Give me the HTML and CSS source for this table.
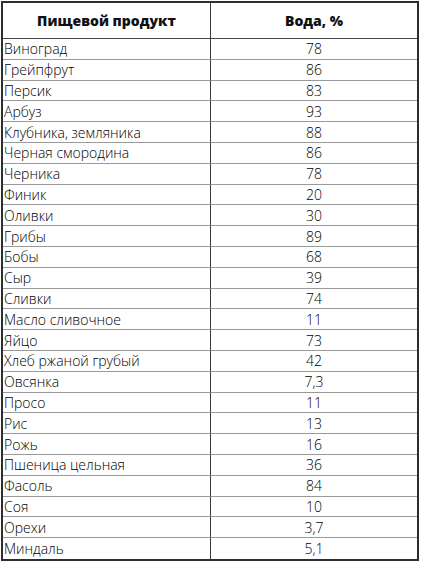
FILE: index.html
```html
<!DOCTYPE html>
<html lang="ru">
<head>
<meta charset="utf-8">
<title>Вода в продуктах</title>
<link rel="stylesheet" href="styles.css">
</head>
<body>
<div class="table">
  <div class="cell head name">Пищевой продукт</div>
  <div class="cell head val">Вода, %</div>
  <div class="cell name">Виноград</div><div class="cell val">78</div>
  <div class="cell name">Грейпфрут</div><div class="cell val">86</div>
  <div class="cell name">Персик</div><div class="cell val">83</div>
  <div class="cell name">Арбуз</div><div class="cell val">93</div>
  <div class="cell name">Клубника, земляника</div><div class="cell val">88</div>
  <div class="cell name">Черная смородина</div><div class="cell val">86</div>
  <div class="cell name">Черника</div><div class="cell val">78</div>
  <div class="cell name">Финик</div><div class="cell val">20</div>
  <div class="cell name">Оливки</div><div class="cell val">30</div>
  <div class="cell name">Грибы</div><div class="cell val">89</div>
  <div class="cell name">Бобы</div><div class="cell val">68</div>
  <div class="cell name">Сыр</div><div class="cell val">39</div>
  <div class="cell name">Сливки</div><div class="cell val">74</div>
  <div class="cell name">Масло сливочное</div><div class="cell val">11</div>
  <div class="cell name">Яйцо</div><div class="cell val">73</div>
  <div class="cell name">Хлеб ржаной грубый</div><div class="cell val">42</div>
  <div class="cell name">Овсянка</div><div class="cell val">7,3</div>
  <div class="cell name">Просо</div><div class="cell val">11</div>
  <div class="cell name">Рис</div><div class="cell val">13</div>
  <div class="cell name">Рожь</div><div class="cell val">16</div>
  <div class="cell name">Пшеница цельная</div><div class="cell val">36</div>
  <div class="cell name">Фасоль</div><div class="cell val">84</div>
  <div class="cell name">Соя</div><div class="cell val">10</div>
  <div class="cell name">Орехи</div><div class="cell val">3,7</div>
  <div class="cell name last">Миндаль</div><div class="cell val last">5,1</div>
</div>
</body>
</html>
```
FILE: styles.css
```css
html, body {
  margin: 0;
  padding: 0;
  background: #ffffff;
}
body {
  padding: 1px 0 0 1px;
  font-family: "Open Sans", "Liberation Sans", sans-serif;
  font-size: 14px;
  font-weight: 300;
  color: #000000;
}
.table {
  width: 418px;
  box-sizing: border-box;
  border: 2px solid #2e2e2e;
  display: grid;
  grid-template-columns: 208px 1fr;
  grid-template-rows: 36px;
  grid-auto-rows: 20.8px;
}
.cell {
  box-sizing: border-box;
  border-bottom: 1px solid #9a9a9a;
  display: flex;
  align-items: center;
  line-height: 1;
  white-space: nowrap;
  padding-top: 1px;
}
.cell.name {
  border-right: 1px solid #3a3a3a;
  padding-left: 1px;
}
.cell.val {
  justify-content: center;
}
.cell.head {
  font-weight: 800;
  justify-content: center;
  border-bottom: 1px solid #444444;
  color: #111111;
  padding-left: 0;
}
.cell.last {
  border-bottom: none;
}
```
